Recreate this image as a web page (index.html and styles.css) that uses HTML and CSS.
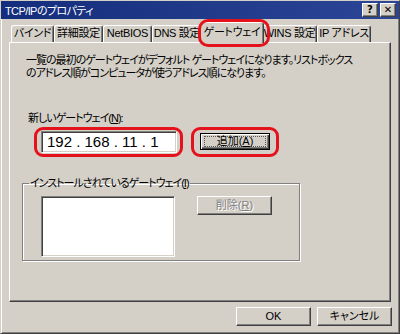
FILE: index.html
```html
<!DOCTYPE html>
<html lang="ja">
<head>
<meta charset="UTF-8">
<title>TCP/IPのプロパティ</title>
<link rel="stylesheet" href="styles.css">
</head>
<body>

<div class="window">
  <div class="titlebar">
    <span class="title">TCP/IPのプロパティ</span>
    <div class="title-btns">
      <span class="tbtn">?</span>
      <span class="tbtn">&#x2715;</span>
    </div>
  </div>

  <div class="tabs">
    <div class="tab w43">バインド</div>
    <div class="tab w49">詳細設定</div>
    <div class="tab w49">NetBIOS</div>
    <div class="tab w50">DNS 設定</div>
    <div class="tab active">ゲートウェイ</div>
    <div class="tab w55">WINS 設定</div>
    <div class="tab w54">IP アドレス</div>
  </div>

  <div class="panel">
    <p class="desc">一覧の最初のゲートウェイがデフォルト ゲートウェイになります。リストボックス<br>のアドレス順がコンピュータが使うアドレス順になります。</p>

    <div class="field-label">新しいゲートウェイ(<u>N</u>):</div>
    <div class="add-row">
      <span class="mark mark-input">
        <span class="ipbox">192 . 168 . 11 . 1</span>
      </span>
      <span class="mark mark-btn">
        <button class="btn default"><span class="focus">追加(<u>A</u>)</span></button>
      </span>
    </div>

    <fieldset class="group">
      <legend>インストールされているゲートウェイ(<u>I</u>)</legend>
      <div class="listbox"></div>
      <button class="btn del" disabled>削除(<u>R</u>)</button>
    </fieldset>
  </div>

  <div class="footer">
    <button class="btn">OK</button>
    <button class="btn">キャンセル</button>
  </div>
</div>

</body>
</html>
```

FILE: styles.css
```css
  * {
    box-sizing: border-box;
  }
  body {
    margin: 0;
    background: #d4d0c8;
    font-family: "Liberation Sans", "Noto Sans CJK JP", sans-serif;
    font-size: 11px;
    font-feature-settings: "palt";
    letter-spacing: -1px;
    color: #000;
  }
  .window {
    width: 400px;
    height: 334px;
    background: #d4d0c8;
    border: 1px solid;
    border-color: #d4d0c8 #404040 #404040 #d4d0c8;
    box-shadow: inset 1px 1px #fff, inset -1px -1px #808080;
  }
  .titlebar {
    height: 18px;
    display: flex;
    align-items: center;
    justify-content: space-between;
    background: linear-gradient(90deg, #142d7c, #2c4596);
    color: #fff;
    padding: 0 3px 0 4px;
  }
  .title {
    letter-spacing: -0.6px;
  }
  .title-btns {
    display: flex;
    gap: 2px;
  }
  .tbtn {
    width: 16px;
    height: 14px;
    background: #d4d0c8;
    color: #000;
    font-family: "DejaVu Sans", sans-serif;
    font-weight: bold;
    font-size: 10px;
    letter-spacing: 0;
    line-height: 12px;
    text-align: center;
    border: 1px solid;
    border-color: #fff #404040 #404040 #fff;
    box-shadow: inset -1px -1px #808080;
  }

  /* tabs */
  .tabs {
    display: flex;
    align-items: flex-end;
    height: 20px;
    margin: 3px 8px 0;
    padding-left: 2px;
    position: relative;
    z-index: 2;
  }
  .tab {
    height: 17px;
    line-height: 15px;
    text-align: center;
    letter-spacing: -0.3px;
    border: 1px solid;
    border-bottom: none;
    border-color: #fff #404040 transparent #fff;
    border-radius: 3px 3px 0 0;
    box-shadow: inset -1px 0 #808080;
    white-space: nowrap;
  }
  .w43 { width: 43px; }
  .w49 { width: 49px; }
  .w50 { width: 50px; }
  .w54 { width: 54px; }
  .w55 { width: 55px; }
  .tab.active {
    position: relative;
    width: 64px;
    height: 21px;
    line-height: 18px;
    margin: 0 -2px -1px;
    background: #d4d0c8;
  }
  .tab.active::after {
    content: "";
    position: absolute;
    top: -4px;
    left: -3px;
    right: -7px;
    bottom: -4px;
    border: 3px solid #e4131b;
    border-radius: 10px;
  }

  /* panel */
  .panel {
    margin: 0 8px;
    height: 260px;
    border: 1px solid;
    border-color: #fff #404040 #404040 #fff;
    box-shadow: inset -1px -1px #808080;
    padding: 11px 12px 0;
  }
  .desc {
    margin: 0 0 0 4px;
    line-height: 13px;
  }
  .field-label {
    margin: 32px 0 0 6px;
    line-height: 13px;
  }
  .add-row {
    display: flex;
    gap: 8px;
    margin: 2px 0 0 12px;
  }
  .mark {
    display: flex;
    border: 3px solid #e4131b;
    border-radius: 9px;
  }
  .mark-input {
    padding: 1px 3px 1px 4px;
  }
  .mark-btn {
    padding: 3px 6px 4px;
  }
  .ipbox {
    width: 136px;
    height: 22px;
    background: #fff;
    border: 1px solid;
    border-color: #808080 #fff #fff #808080;
    box-shadow: inset 1px 1px #404040, inset -1px -1px #d4d0c8;
    padding: 0 5px;
    font-family: "Liberation Sans", sans-serif;
    font-size: 15px;
    letter-spacing: 0;
    line-height: 20px;
    white-space: pre;
  }

  /* buttons */
  .btn {
    width: 75px;
    height: 19px;
    padding: 0;
    background: #d4d0c8;
    font: inherit;
    line-height: 15px;
    color: #000;
    border: 1px solid;
    border-color: #fff #404040 #404040 #fff;
    box-shadow: inset -1px -1px #808080;
  }
  .btn.default {
    width: 70px;
    height: 17px;
    border: 1px solid #000;
    box-shadow: inset 1px 1px #fff, inset -1px -1px #404040, inset -2px -2px #808080;
    display: flex;
    padding: 2px 3px;
  }
  .focus {
    flex: 1;
    border: 1px dotted #555;
    line-height: 9px;
  }
  .btn:disabled {
    color: #808080;
    text-shadow: 1px 1px #fff;
  }

  /* group box */
  .group {
    display: flex;
    align-items: flex-start;
    width: 278px;
    height: 84px;
    margin: 20px 0 0;
    padding: 6px 0 0 18px;
    border: 1px solid #808080;
    box-shadow: 1px 1px #fff, inset 1px 1px #fff;
  }
  .group legend {
    padding: 0 1px;
    margin-left: -12px;
    line-height: 13px;
  }
  .listbox {
    width: 134px;
    height: 61px;
    background: #fff;
    border: 1px solid;
    border-color: #808080 #fff #fff #808080;
    box-shadow: inset 1px 1px #404040, inset -1px -1px #d4d0c8;
  }
  .btn.del {
    margin-left: 22px;
  }

  .footer {
    display: flex;
    justify-content: flex-end;
    gap: 6px;
    margin: 5px 7px 0 0;
  }
```
